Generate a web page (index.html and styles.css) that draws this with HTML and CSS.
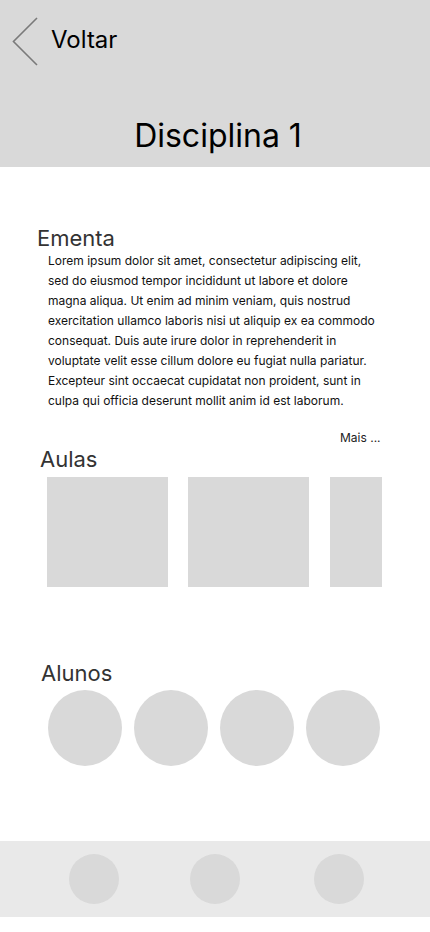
FILE: index.html
```html
<!DOCTYPE html>
<html lang="pt">
<head>
<meta charset="utf-8">
<title>Disciplina 1</title>
<link rel="stylesheet" href="styles.css">
</head>
<body>
<div class="screen">
  <header class="header">
    <div class="back">
      <svg class="chev" width="26" height="50" viewBox="0 0 26 50"><path d="M25 1 L1.5 24.5 L25 48" fill="none" stroke="#7a7a7a" stroke-width="1.6"/></svg>
      <span class="back-label">Voltar</span>
    </div>
    <h1 class="title">Disciplina 1</h1>
  </header>

  <section class="ementa">
    <h2 class="sec-title">Ementa</h2>
    <p class="lorem">Lorem ipsum dolor sit amet, consectetur adipiscing elit, sed do eiusmod tempor incididunt ut labore et dolore magna aliqua. Ut enim ad minim veniam, quis nostrud exercitation ullamco laboris nisi ut aliquip ex ea commodo consequat. Duis aute irure dolor in reprehenderit in voluptate velit esse cillum dolore eu fugiat nulla pariatur. Excepteur sint occaecat cupidatat non proident, sunt in culpa qui officia deserunt mollit anim id est laborum.</p>
  </section>

  <section class="aulas">
    <div class="aulas-head">
      <h2 class="sec-title">Aulas</h2>
      <span class="mais">Mais ...</span>
    </div>
    <div class="aulas-row">
      <div class="aula"></div>
      <div class="aula"></div>
      <div class="aula aula-cut"></div>
    </div>
  </section>

  <section class="alunos">
    <h2 class="sec-title">Alunos</h2>
    <div class="alunos-row">
      <div class="aluno"></div>
      <div class="aluno"></div>
      <div class="aluno"></div>
      <div class="aluno"></div>
    </div>
  </section>

  <nav class="tabbar">
    <div class="tab t1"></div>
    <div class="tab t2"></div>
    <div class="tab t3"></div>
  </nav>
</div>
</body>
</html>
```

FILE: styles.css
```css
* { box-sizing: border-box; }
html, body { margin: 0; padding: 0; background: #fff; }
body { font-family: Inter, "Noto Sans", sans-serif; color: #000; }
.screen { width: 430px; height: 932px; display: flex; flex-direction: column; }

.header { background: #d9d9d9; height: 167px; display: flex; flex-direction: column; }
.back { display: flex; align-items: center; padding: 17px 0 0 12px; height: 67px; }
.chev { display: block; flex: none; }
.back-label { font-size: 24px; margin-left: 13px; margin-top: -5px; letter-spacing: 0; }
.title { margin: 49px 0 0 0; font-weight: 400; font-size: 32px; text-align: center; line-height: 40px; padding-left: 6px; }

.sec-title { margin: 0; font-weight: 400; font-size: 22px; color: #333; line-height: 26px; }

.ementa { padding: 58px 0 0 37px; }
.lorem { margin: 0; padding-left: 11px; width: 340px; font-size: 12px; line-height: 20px; color: #111; }

.aulas { padding: 22px 0 0 40px; }
.aulas-head { position: relative; }
.mais { position: absolute; left: 300px; top: -3px; font-size: 12px; color: #222; }
.aulas-head .sec-title { padding-top: 13px; }
.aulas-row { display: flex; gap: 20px; padding: 5px 0 0 7px; }
.aula { width: 121px; height: 110px; background: #d9d9d9; flex: none; }
.aula-cut { width: 52px; margin-left: 1px; }

.alunos { padding: 73px 0 0 41px; }
.alunos-row { display: flex; gap: 12px; padding: 4px 0 0 7px; }
.aluno { width: 74px; height: 76px; border-radius: 50%; background: #d9d9d9; flex: none; }

.tabbar { margin-top: 75px; height: 76px; background: #e9e9e9; display: flex; align-items: center; }
.tab { width: 50px; height: 50px; border-radius: 50%; background: #d9d9d9; flex: none; }
.t1 { margin-left: 69px; }
.t2 { margin-left: 71px; }
.t3 { margin-left: 74px; }
```
